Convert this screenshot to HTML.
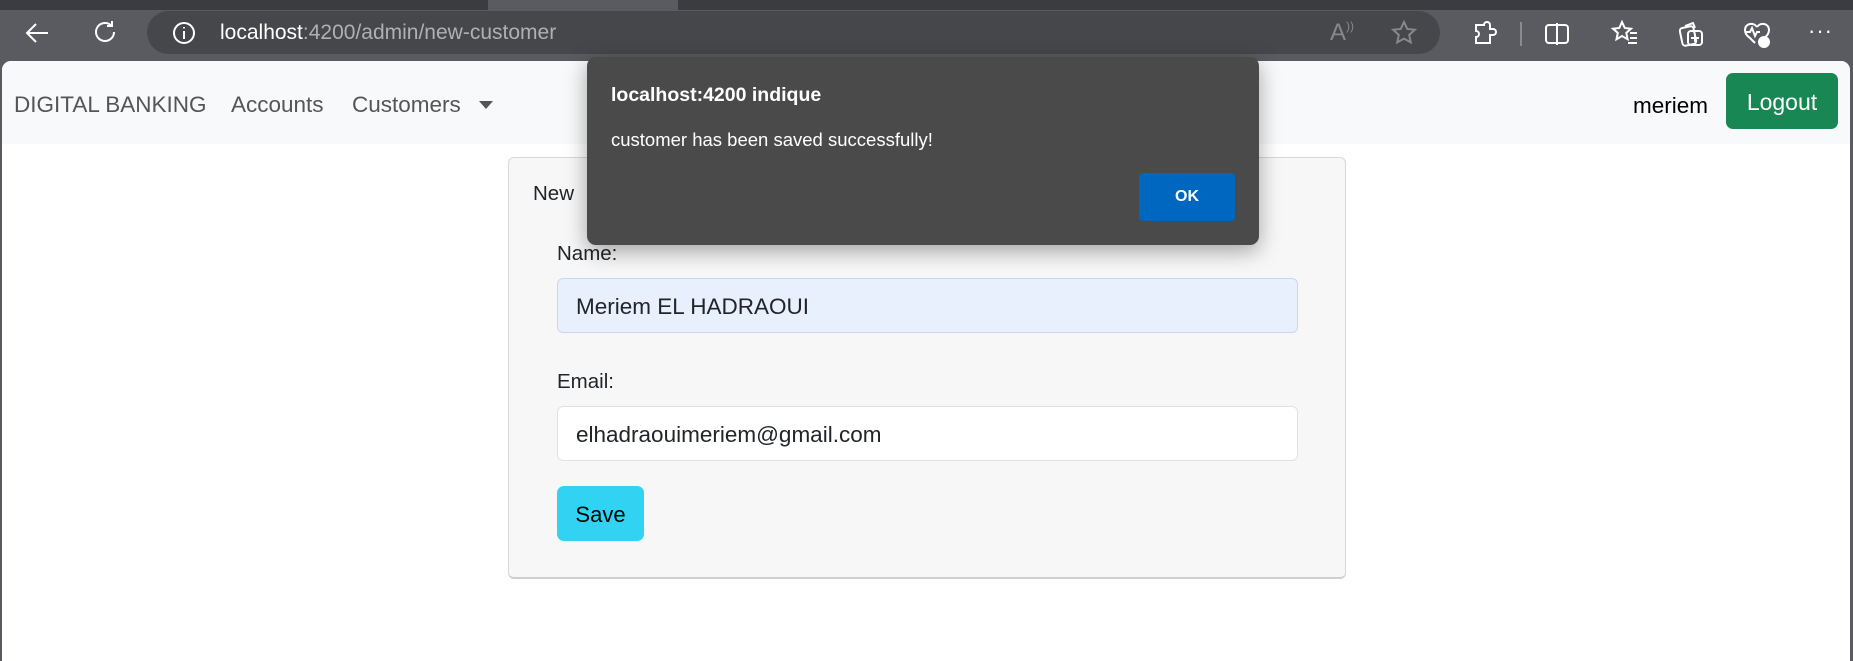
<!DOCTYPE html>
<html><head><meta charset="utf-8"><style>
*{box-sizing:border-box;margin:0;padding:0}
body{width:1853px;height:657px;overflow:hidden;background:#5a5b60;font-family:"Liberation Sans",sans-serif;position:relative}
.abs{position:absolute}
.tabs{left:0;top:0;width:1853px;height:10px;background:#3b3c40}
.addr{left:147px;top:11px;width:1293px;height:43px;background:#46474b;border-radius:22px}
.url{left:220px;top:21px;font-size:21px;color:#aeb0b4}
.url b{font-weight:normal;color:#fff}
.page{left:2px;top:61px;width:1848px;height:600px;background:#fff;border-radius:9px 9px 0 0;overflow:hidden}
.nav{left:0;top:0;width:1848px;height:83px;background:#f8f9fa}
.nt{font-size:22.5px;color:#555;top:31px}
.card{left:506px;top:96px;width:838px;height:422px;background:#f7f7f7;border:1px solid #d8d8d8;border-radius:6px;border-bottom:2px solid #cfcfcf}
.lbl{font-size:20.5px;color:#212529}
.inp{left:555px;width:741px;height:55px;border:1px solid #dee2e6;border-radius:6px;font-size:22.5px;padding:15px 0 0 18px;color:#212529;background:#fff}
.dlg{left:587px;top:57px;width:672px;height:188px;background:#4a4a4a;border-radius:9px;box-shadow:0 6px 22px rgba(0,0,0,.35);color:#fff}
svg{position:absolute}
</style></head><body>
<div class="abs tabs"></div>
<div class="abs" style="left:488px;top:0;width:190px;height:10px;background:#5a5b60"></div>
<div class="abs addr"></div>
<svg style="left:22px;top:18px" width="30" height="30" viewBox="0 0 30 30" fill="none" stroke="#fff" stroke-width="2"><path d="M26 15H5M14 6l-9 9 9 9"/></svg>
<svg style="left:90px;top:17px" width="30" height="30" viewBox="0 0 30 30" fill="none" stroke="#fff" stroke-width="2"><path d="M24 15a9 9 0 1 1-3-6.7M22 4v5h-5"/></svg>
<svg style="left:171px;top:20px" width="26" height="26" viewBox="0 0 26 26" fill="none" stroke="#fff" stroke-width="2"><circle cx="13" cy="13" r="10"/><path d="M13 11v8M13 7v1.5"/></svg>
<div class="abs url"><b>localhost</b>:4200/admin/new-customer</div>
<div class="abs" style="left:1330px;top:19px;font-size:24px;color:#888">A<span style="font-size:12px;vertical-align:top">))</span></div>
<svg style="left:1390px;top:19px" width="28" height="28" viewBox="0 0 28 28" fill="none" stroke="#888" stroke-width="2"><path d="M14 3l3.3 7 7.5.8-5.6 5.1 1.6 7.5L14 19.6 7.2 23.4l1.6-7.5-5.6-5.1 7.5-.8z"/></svg>
<svg style="left:1470px;top:20px" width="28" height="28" viewBox="0 0 28 28" fill="none" stroke="#fff" stroke-width="2"><path d="M9 5h5a3 3 0 0 1 6 0v4h3a3 3 0 0 1 0 6h-3v8H6v-6a3 3 0 0 0 0-6V5z"/></svg>
<div class="abs" style="left:1520px;top:22px;width:2px;height:24px;background:#8a8b8f"></div>
<svg style="left:1543px;top:20px" width="28" height="28" viewBox="0 0 28 28" fill="none" stroke="#fff" stroke-width="2"><rect x="3" y="5" width="22" height="18" rx="3"/><path d="M14 3v22"/></svg>
<svg style="left:1610px;top:19px" width="30" height="30" viewBox="0 0 30 30" fill="none" stroke="#fff" stroke-width="2"><path d="M12 3l2.8 6 6.2.7-4.7 4.2 1.3 6.3L12 17l-5.5 3.2 1.3-6.3L3 9.7l6.3-.7z"/><path d="M20 14h7M20 19h7M18 24h9"/></svg>
<svg style="left:1677px;top:19px" width="30" height="30" viewBox="0 0 30 30" fill="none" stroke="#fff" stroke-width="2"><path d="M8 7l8-3 2 5"/><rect x="4" y="8" width="14" height="18" rx="3" transform="rotate(-12 11 17)"/><rect x="11" y="12" width="14" height="14" rx="3"/><path d="M18 15v8M14 19h8"/></svg>
<svg style="left:1742px;top:19px" width="30" height="30" viewBox="0 0 30 30" fill="none" stroke="#fff" stroke-width="2"><path d="M15 8c3-5 12-4 12 3 0 3-2 6-5 8M15 8C12 3 3 4 3 11c0 3 2 6 5 8l5 5"/><path d="M3 13h5l2-4 3 8 2-4h3"/><circle cx="22" cy="23" r="5" fill="#fff"/></svg>
<div class="abs" style="left:1808px;top:18px;font-size:22px;color:#fff;letter-spacing:1px">···</div>

<div class="abs page">
 <div class="abs nav"></div>
 <div class="abs nt" style="left:12px">DIGITAL BANKING</div>
 <div class="abs nt" style="left:229px">Accounts</div>
 <div class="abs nt" style="left:350px">Customers</div>
 <div class="abs" style="left:477px;top:40px;width:0;height:0;border-left:7px solid transparent;border-right:7px solid transparent;border-top:8px solid #555"></div>
 <div class="abs" style="left:1631px;top:32px;font-size:22.5px;color:#000">meriem</div>
 <div class="abs" style="left:1724px;top:12px;width:112px;height:56px;background:#198754;border-radius:7px;color:#fff;font-size:23px;text-align:center;line-height:58px">Logout</div>

 <div class="abs card"></div>
 <div class="abs lbl" style="left:531px;top:121px">New</div>
 <div class="abs lbl" style="left:555px;top:181px">Name:</div>
 <div class="abs inp" style="top:217px;background:#e8f0fe;border-color:#c9d7ee">Meriem EL HADRAOUI</div>
 <div class="abs lbl" style="left:555px;top:309px">Email:</div>
 <div class="abs inp" style="top:345px">elhadraouimeriem@gmail.com</div>
 <div class="abs" style="left:555px;top:425px;width:87px;height:55px;background:#31d2f2;border-radius:7px;font-size:22px;color:#000;text-align:center;line-height:58px">Save</div>
</div>

<div class="abs dlg">
 <div class="abs" style="left:24px;top:27px;font-size:19.5px;font-weight:bold">localhost:4200 indique</div>
 <div class="abs" style="left:24px;top:72px;font-size:18.5px">customer has been saved successfully!</div>
 <div class="abs" style="left:552px;top:116px;width:96px;height:48px;background:#0067c0;border-radius:4px;font-size:16px;font-weight:bold;text-align:center;line-height:48px">OK</div>
</div>
</body></html>
